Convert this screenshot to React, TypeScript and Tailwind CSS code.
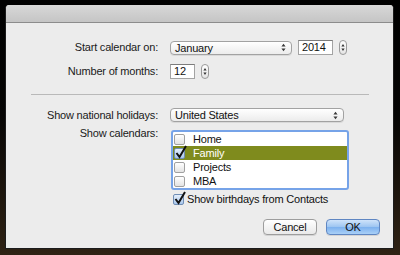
import React from "react";

const PopArrows = () => (
  <svg width="5" height="9" viewBox="0 0 5 9" className="shrink-0">
    <path d="M2.5 0.8 L4.6 3.6 H0.4Z M2.5 8.2 L4.6 5.4 H0.4Z" fill="#3a3a3a" />
  </svg>
);

const Popup = ({ label, w }: { label: string; w: string }) => (
  <div
    className={`${w} h-[14px] flex items-center justify-between pl-[4px] pr-[5px] rounded-[4px] border border-[#a2a2a2] bg-gradient-to-b from-white to-[#ececec] shadow-[0_1px_0_rgba(0,0,0,0.08)] leading-[12px] text-[#111]`}
  >
    <span>{label}</span>
    <PopArrows />
  </div>
);

const Field = ({ v, w }: { v: string; w: string }) => (
  <div
    className={`${w} h-[15px] bg-white border border-[#a3a3a3] border-t-[#7c7c7c] pl-[3px] leading-[13px] text-[#111]`}
  >
    {v}
  </div>
);

const Stepper = ({ cls }: { cls: string }) => (
  <div
    className={`${cls} w-[8px] h-[15px] rounded-full border border-[#9a9a9a] bg-gradient-to-b from-white to-[#e4e4e4] flex flex-col items-center justify-center`}
  >
    <svg width="4" height="9" viewBox="0 0 4 9">
      <path d="M2 1 L3.6 3.4 H0.4Z M2 8 L3.6 5.6 H0.4Z" fill="#333" />
    </svg>
  </div>
);

const Check = ({ checked }: { checked: boolean }) => (
  <div className="relative w-[11px] h-[11px] shrink-0">
    <div
      className={
        checked
          ? "w-[11px] h-[11px] rounded-[2px] border border-[#6f8db5] bg-gradient-to-b from-[#e3eefb] to-[#a9c7ec]"
          : "w-[11px] h-[11px] rounded-[2px] border border-[#a0a0a0] bg-gradient-to-b from-white to-[#e3e3e3]"
      }
    />
    {checked && (
      <svg
        className="absolute left-[1px] top-[-3px]"
        width="12"
        height="14"
        viewBox="0 0 12 14"
      >
        <path
          d="M1.5 8 L4.5 12 L11 1"
          fill="none"
          stroke="#111"
          strokeWidth="2"
        />
      </svg>
    )}
  </div>
);

const Row = ({
  label,
  checked,
  sel,
}: {
  label: string;
  checked: boolean;
  sel?: boolean;
}) => (
  <div
    className={`h-[14px] flex items-center pl-[1px] ${
      sel ? "bg-[#7f8b1d] text-white" : "text-[#111]"
    }`}
  >
    <Check checked={checked} />
    <span className="ml-[8px] leading-[12px]">{label}</span>
  </div>
);

export default function App() {
  return (
    <div className="w-[400px] h-[255px] bg-[linear-gradient(to_bottom,#000_0%,#060504_45%,#2f2214_100%)] pl-[5px] pt-[5px] font-['Liberation_Sans',Arial,sans-serif] text-[11px] tracking-[-0.2px]">
      <div className="w-[389px] h-[244px] flex flex-col bg-[#ececec] border-x border-b border-[#1c1c1c] rounded-t-[4px] overflow-hidden">
        <div className="h-[18px] shrink-0 bg-gradient-to-b from-[#d8d8d8] to-[#c5c5c5] border-b border-[#8c8c8c]" />

        <div className="mt-[17px] h-[15px] flex items-center">
          <div className="w-[152px] text-right text-[#1a1a1a]">Start calendar on:</div>
          <div className="ml-[12px]">
            <Popup label="January" w="w-[122px]" />
          </div>
          <div className="ml-[6px]">
            <Field v="2014" w="w-[35px]" />
          </div>
          <Stepper cls="ml-[6px]" />
        </div>

        <div className="mt-[9px] h-[15px] flex items-center">
          <div className="w-[152px] text-right text-[#1a1a1a]">Number of months:</div>
          <div className="ml-[12px]">
            <Field v="12" w="w-[25px]" />
          </div>
          <Stepper cls="ml-[6px]" />
        </div>

        <div className="mt-[15px] ml-[25px] w-[338px] h-px bg-[#b9b9b9]" />

        <div className="mt-[13px] h-[14px] flex items-center">
          <div className="w-[152px] text-right text-[#1a1a1a]">Show national holidays:</div>
          <div className="ml-[12px]">
            <Popup label="United States" w="w-[174px]" />
          </div>
        </div>

        <div className="mt-[8px] flex items-start">
          <div className="w-[152px] text-right text-[#1a1a1a] leading-[13px] -mt-[3px]">
            Show calendars:
          </div>
          <div className="ml-[13px] w-[178px] h-[60px] rounded-[3px] border-2 border-[#76a3e8] bg-white flex flex-col">
            <Row label="Home" checked={false} />
            <Row label="Family" checked={true} sel />
            <Row label="Projects" checked={false} />
            <Row label="MBA" checked={false} />
          </div>
        </div>

        <div className="mt-[3px] h-[12px] flex items-center pl-[167px]">
          <Check checked={true} />
          <span className="ml-[3px] text-[#111] leading-[12px]">Show birthdays from Contacts</span>
        </div>

        <div className="mt-[14px] flex justify-end gap-[9px] pr-[13px]">
          <div className="w-[54px] h-[16px] rounded-[4px] border border-[#9d9d9d] bg-gradient-to-b from-white to-[#e9e9e9] shadow-[0_1px_0_rgba(0,0,0,0.1)] flex items-center justify-center text-[#111]">
            Cancel
          </div>
          <div className="w-[54px] h-[16px] rounded-[4px] border border-[#5f86c2] bg-[linear-gradient(to_bottom,#cfe3fa_0%,#9cc4f1_50%,#7cb0ee_51%,#a9d0f7_100%)] shadow-[0_1px_0_rgba(0,0,0,0.1)] flex items-center justify-center text-[#111]">
            OK
          </div>
        </div>
      </div>
    </div>
  );
}
